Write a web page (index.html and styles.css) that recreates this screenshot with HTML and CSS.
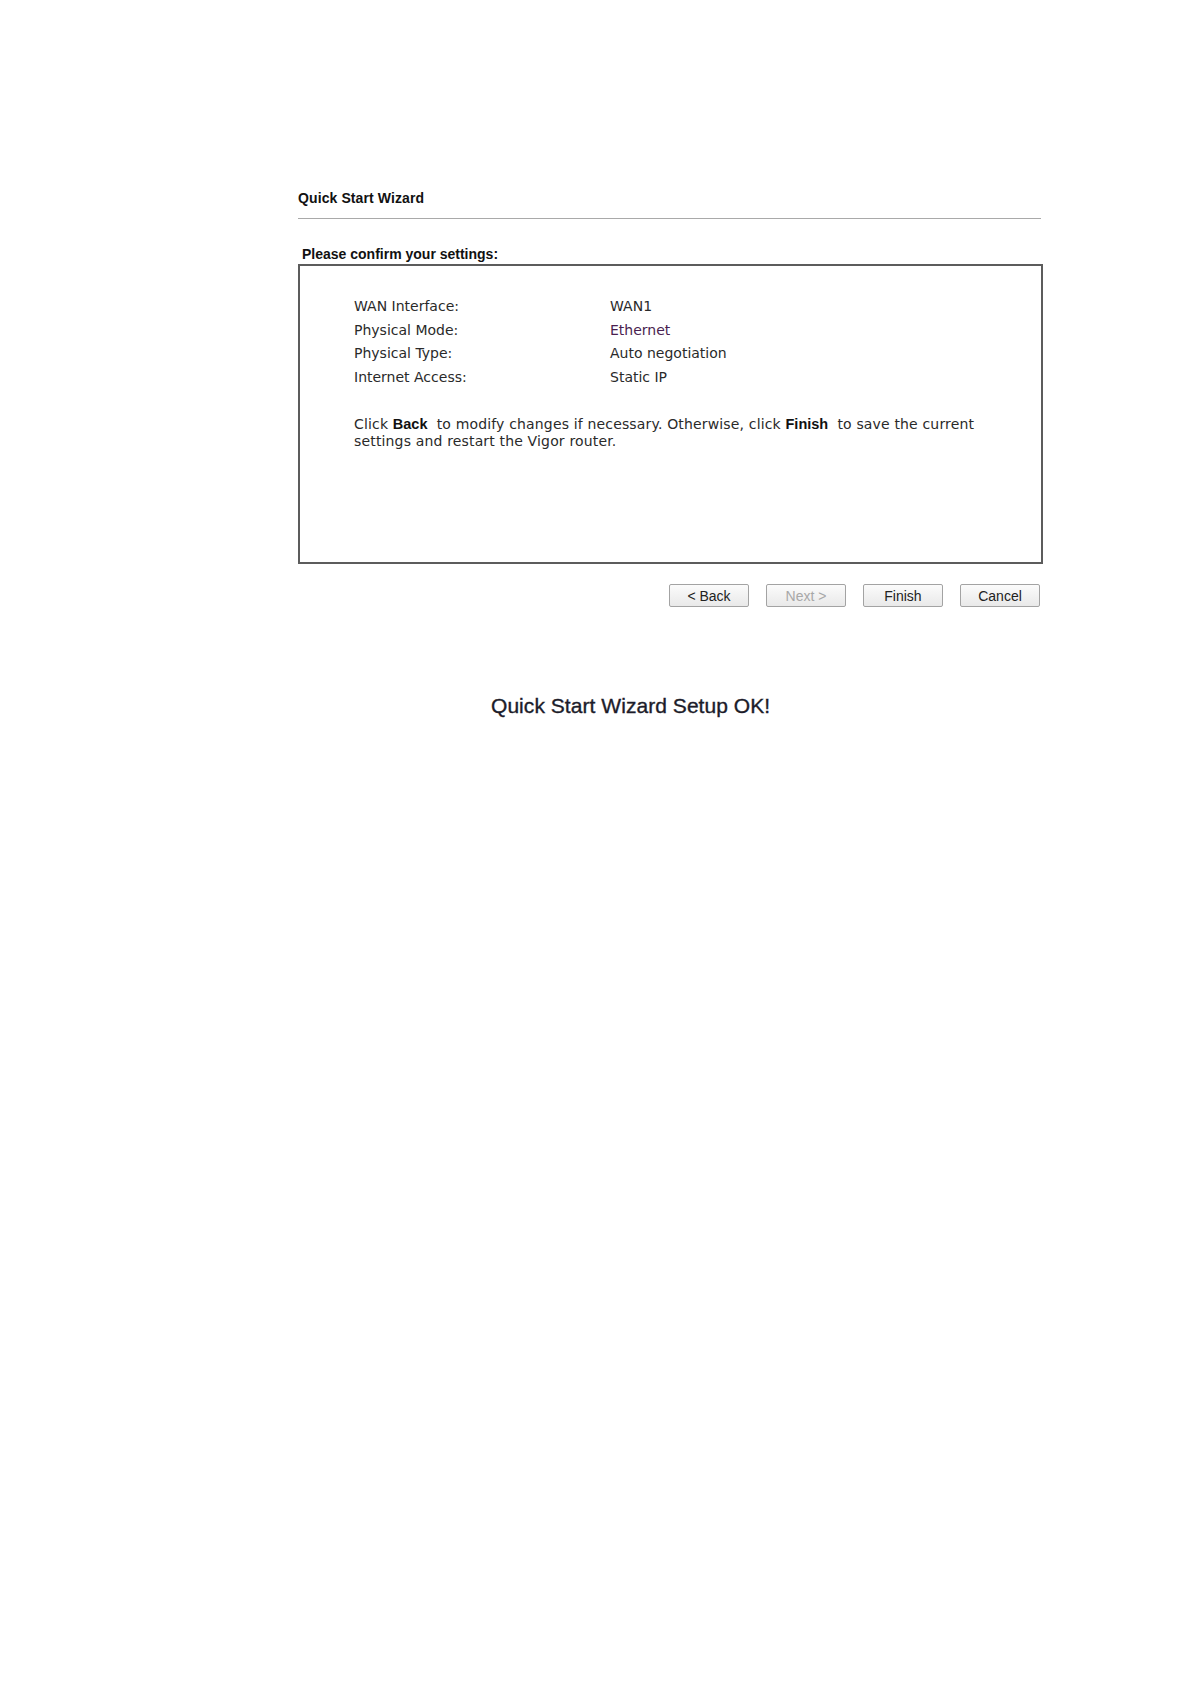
FILE: index.html
```html
<!DOCTYPE html>
<html>
<head>
<meta charset="utf-8">
<link rel="stylesheet" href="styles.css">
</head>
<body>
<div class="page">
  <div class="wizard">
    <div class="title">Quick Start Wizard</div>
    <div class="rule"></div>
    <div class="confirm">Please confirm your settings:</div>
    <div class="box">
      <div class="rows">
        <div class="row"><span class="label">WAN Interface:</span><span class="value">WAN1</span></div>
        <div class="row"><span class="label">Physical Mode:</span><span class="value purple">Ethernet</span></div>
        <div class="row"><span class="label">Physical Type:</span><span class="value">Auto negotiation</span></div>
        <div class="row"><span class="label">Internet Access:</span><span class="value">Static IP</span></div>
      </div>
      <p class="note">Click <b>Back</b>&nbsp; to modify changes if necessary. Otherwise, click <b>Finish</b>&nbsp; to save the current settings and restart the Vigor router.</p>
    </div>
    <div class="buttons">
      <button class="btn">&lt; Back</button>
      <button class="btn disabled">Next &gt;</button>
      <button class="btn">Finish</button>
      <button class="btn">Cancel</button>
    </div>
  </div>
  <div class="ok">Quick Start Wizard Setup OK!</div>
</div>
</body>
</html>
```

FILE: styles.css
```css
html, body {
  margin: 0;
  padding: 0;
  background: #ffffff;
}

.page {
  padding-top: 190px;
  width: 1190px;
  height: 1684px;
  box-sizing: border-box;
}

.wizard {
  margin-left: 298px;
  width: 745px;
  font-family: "Liberation Sans", Arial, sans-serif;
  color: #111;
}

.title {
  font-weight: bold;
  font-size: 14px;
  line-height: 16px;
  height: 16px;
  letter-spacing: 0.1px;
}

.rule {
  margin-top: 12px;
  height: 1px;
  width: 743px;
  background: #a9a9a9;
}

.confirm {
  margin-top: 27px;
  margin-bottom: 2px;
  padding-left: 4px;
  font-weight: bold;
  font-size: 14px;
  line-height: 16px;
}

.box {
  box-sizing: border-box;
  height: 300px;
  border: 2px solid #5c5c5c;
  padding: 29px 50px 0 54px;
  font-family: "DejaVu Sans", Verdana, sans-serif;
  font-size: 14px;
  color: #2a2a2a;
}

.row {
  display: flex;
  line-height: 23.5px;
  height: 23.5px;
}

.label {
  width: 256px;
  flex: none;
}

.value.purple {
  color: #4a1f50;
}

.note {
  margin: 27px 0 0 0;
  line-height: 17px;
  letter-spacing: 0.16px;
}

.note b {
  font-family: "Liberation Sans", Arial, sans-serif;
  font-weight: bold;
  font-size: 14.5px;
  line-height: 17px;
  letter-spacing: 0;
  color: #111;
}

.buttons {
  display: flex;
  justify-content: flex-end;
  gap: 17px;
  margin-top: 20px;
  padding-right: 3px;
}

.btn {
  box-sizing: border-box;
  width: 80px;
  height: 23px;
  padding: 0;
  margin: 0;
  border: 1px solid #a3a3a3;
  border-radius: 2px;
  background: linear-gradient(#fbfbfb, #e9e9e9);
  font-family: "Liberation Sans", Arial, sans-serif;
  font-size: 14px;
  color: #222;
}

.btn.disabled {
  color: #a8a8a8;
}

.ok {
  margin-top: 87px;
  margin-left: 491px;
  font-family: "Liberation Sans", Arial, sans-serif;
  font-size: 21px;
  line-height: 24px;
  color: #1c1c2a;
  -webkit-text-stroke: 0.35px #1c1c2a;
  letter-spacing: 0.05px;
}
```
